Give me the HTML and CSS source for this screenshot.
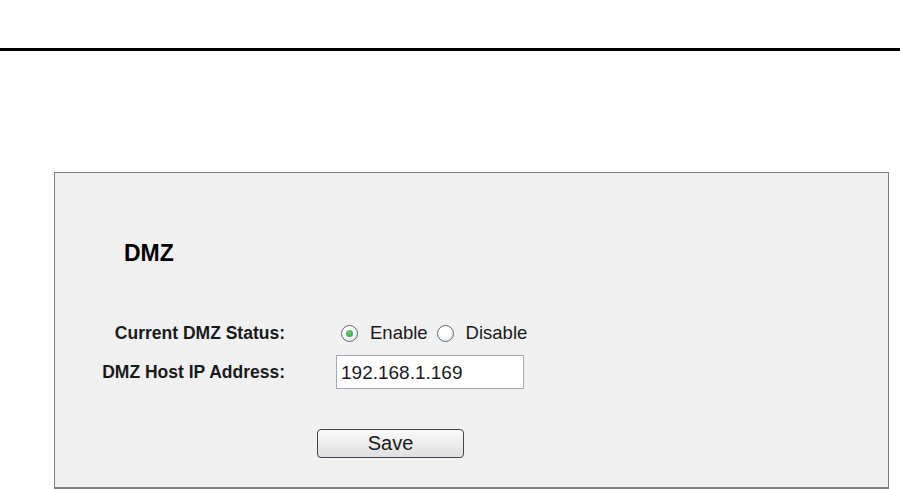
FILE: index.html
```html
<!DOCTYPE html>
<html lang="en">
<head>
  <meta charset="UTF-8" />
  <title>DMZ</title>
  <link rel="stylesheet" href="styles.css">
</head>
<body>
  <div class="top-rule"></div>

  <div class="panel">
    <h1 class="title">DMZ</h1>

    <form class="dmz-form" onsubmit="return false;">
      <div class="row">
        <label class="label">Current DMZ Status:</label>
        <div class="control radios">
          <label class="radio-item">
            <input type="radio" name="status" value="1" checked>
            <span>Enable</span>
          </label>
          <label class="radio-item">
            <input type="radio" name="status" value="0">
            <span>Disable</span>
          </label>
        </div>
      </div>

      <div class="row">
        <label class="label" for="hostIp">DMZ Host IP Address:</label>
        <div class="control">
          <input type="text" id="hostIp" class="ip-input" value="192.168.1.169">
        </div>
      </div>

      <div class="actions">
        <button type="submit" class="save-btn">Save</button>
      </div>
    </form>
  </div>
</body>
</html>
```

FILE: styles.css
```css
body {
  margin: 0;
  font-family: "Liberation Sans", Arial, sans-serif;
  background: #ffffff;
  color: #1c1c1c;
}

.top-rule {
  height: 3px;
  background: #000;
  margin-top: 48px;
}

.panel {
  box-sizing: border-box;
  margin: 121px 0 0 54px;
  width: 835px;
  height: 317px;
  background: #f0f0f0;
  border: 1px solid #7f7f7f;
  border-bottom-width: 2px;
  padding: 66px 0 0 69px;
}

.title {
  margin: 0;
  font-size: 23px;
  line-height: 28px;
  font-weight: bold;
  color: #000;
}

.dmz-form {
  margin: 51px 0 0 -69px;
}

.row {
  display: grid;
  grid-template-columns: 230px auto;
  column-gap: 51px;
  align-items: center;
  min-height: 30px;
  margin-bottom: 7px;
}

.label {
  text-align: right;
  font-size: 17.5px;
  font-weight: bold;
  color: #1a1a1a;
}

.control {
  font-size: 18.5px;
  color: #1a1a1a;
}

.radios {
  display: flex;
  align-items: center;
}

.radio-item {
  display: flex;
  align-items: center;
}

.radio-item input {
  appearance: none;
  -webkit-appearance: none;
  box-sizing: border-box;
  width: 17px;
  height: 17px;
  margin: 0 12px 0 5px;
  border: 1px solid #5f6d7b;
  border-radius: 50%;
  background: radial-gradient(circle at 40% 35%, #ffffff 30%, #d9dee4 100%);
  position: relative;
}

.radio-item + .radio-item input {
  margin-left: 9px;
}

.radio-item input:checked::after {
  content: "";
  position: absolute;
  left: 4px;
  top: 4px;
  width: 7px;
  height: 7px;
  border-radius: 50%;
  background: radial-gradient(circle at 40% 35%, #6fd07a, #229a35);
}

.ip-input {
  box-sizing: border-box;
  width: 188px;
  height: 34px;
  margin: 0;
  padding: 2px 4px 0;
  border: 1px solid #a4acb8;
  background: #fff;
  font-family: "Liberation Sans", Arial, sans-serif;
  font-size: 19px;
  color: #1a1a1a;
}

.actions {
  margin: 40px 0 0 262px;
}

.save-btn {
  width: 147px;
  height: 29px;
  padding: 0;
  border: 1px solid #3c4550;
  border-radius: 4px;
  background: linear-gradient(#fbfbfb, #ececec 50%, #e0e0e0);
  font-family: "Liberation Sans", Arial, sans-serif;
  font-size: 20px;
  color: #1a1a1a;
}
```
